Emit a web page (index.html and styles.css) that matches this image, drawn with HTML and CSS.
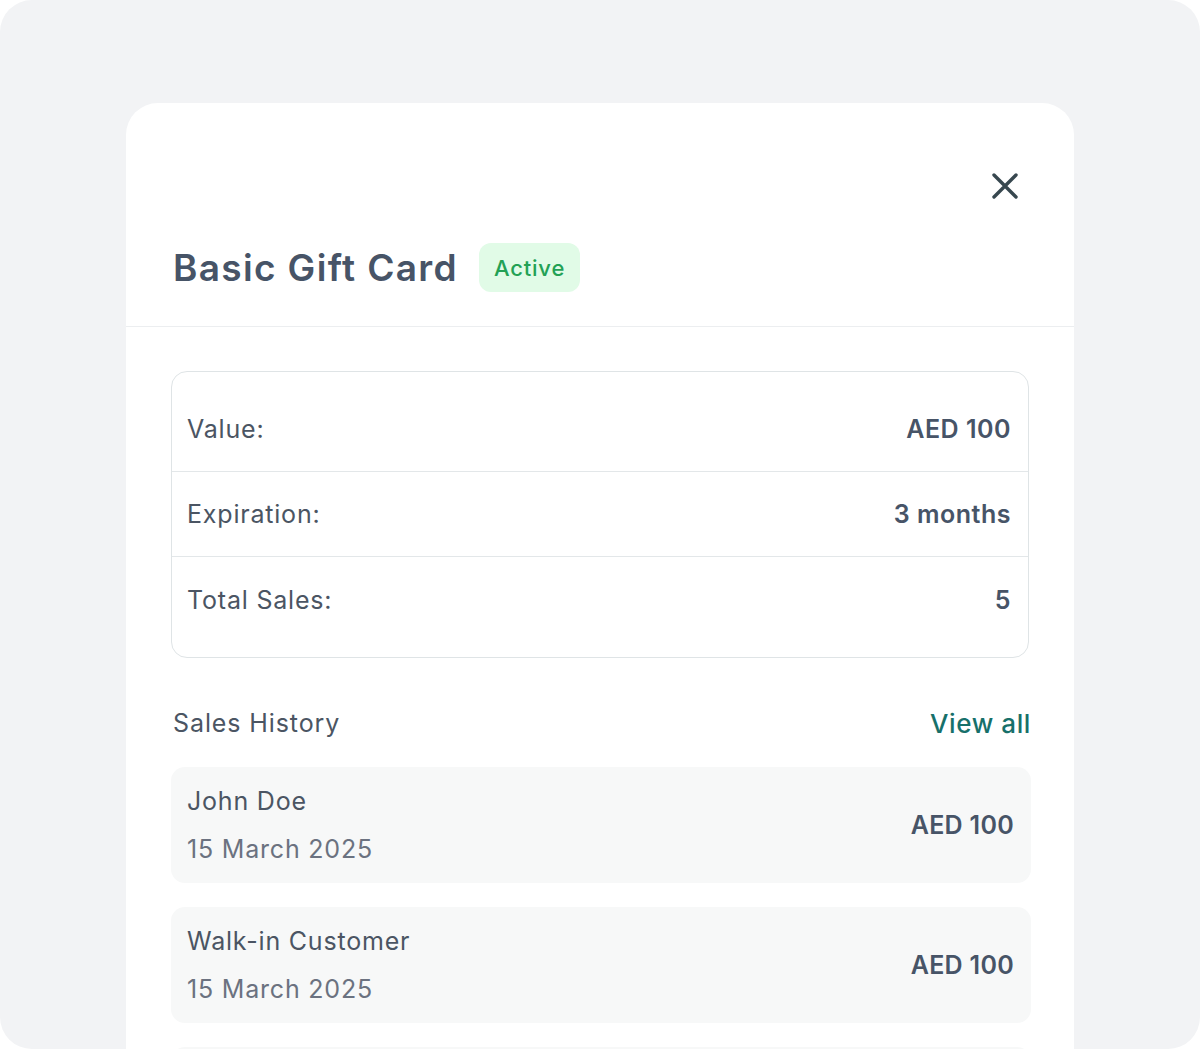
FILE: index.html
```html
<!DOCTYPE html>
<html lang="en">
<head>
<meta charset="utf-8">
<title>Basic Gift Card</title>
<link rel="stylesheet" href="styles.css">
</head>
<body>
<div class="screen">
  <div class="modal">
    <header class="modal-header">
      <div class="close-row">
        <button class="close-btn" aria-label="Close">
          <svg width="30" height="30" viewBox="0 0 30 30" fill="none">
            <path d="M4 4L26 26M26 4L4 26" stroke="#37474f" stroke-width="3.4" stroke-linecap="round"/>
          </svg>
        </button>
      </div>
      <div class="title-row">
        <h1 class="title">Basic Gift Card</h1>
        <span class="badge">Active</span>
      </div>
    </header>
    <section class="modal-body">
      <div class="info-box">
        <div class="info-row"><span class="label">Value:</span><span class="value">AED 100</span></div>
        <div class="info-row"><span class="label">Expiration:</span><span class="value">3 months</span></div>
        <div class="info-row"><span class="label">Total Sales:</span><span class="value">5</span></div>
      </div>
      <div class="history-head">
        <span class="history-title">Sales History</span>
        <a class="view-all" href="#">View all</a>
      </div>
      <div class="sales">
        <div class="sale">
          <div class="sale-info"><div class="sale-name">John Doe</div><div class="sale-date">15 March 2025</div></div>
          <div class="sale-amount">AED 100</div>
        </div>
        <div class="sale">
          <div class="sale-info"><div class="sale-name">Walk-in Customer</div><div class="sale-date">15 March 2025</div></div>
          <div class="sale-amount">AED 100</div>
        </div>
        <div class="sale"></div>
      </div>
    </section>
  </div>
</div>
</body>
</html>
```
FILE: styles.css
```css
* { box-sizing: border-box; }
html, body { margin: 0; padding: 0; background: #ffffff; }
body { font-family: Inter, "Open Sans", sans-serif; color: #4b5563; }
.screen {
  height: 1049px;
  overflow: hidden;
  background: #f2f3f5;
  border-radius: 32px;
  padding: 103px 126px 0 126px;
}
.modal {
  background: #ffffff;
  border-radius: 32px 32px 0 0;
  height: 946px;
  overflow: hidden;
}
.modal-header {
  padding: 63px 49px 34px 47px;
  border-bottom: 1px solid #eceef0;
}
.close-row { display: flex; justify-content: flex-end; }
.close-btn {
  width: 40px; height: 40px;
  display: flex; align-items: center; justify-content: center;
  border: 0; background: transparent; padding: 0;
}
.title-row {
  margin-top: 37px;
  height: 49px;
  display: flex; align-items: center; gap: 21px;
}
.title {
  margin: 0;
  font-size: 37px;
  font-weight: 600;
  color: #475467;
  letter-spacing: 1.35px;
}
.badge {
  height: 49px;
  padding: 0 15px;
  display: flex; align-items: center;
  background: #e1fbe7;
  color: #23a155;
  border-radius: 12px;
  font-size: 22px;
  font-weight: 500;
  letter-spacing: 0.8px;
}
.modal-body { padding: 44px 43px 0 45px; }
.info-box {
  margin-right: 2px;
  border: 1px solid #dfe4e6;
  border-radius: 16px;
  padding: 15px 0;
}
.info-row {
  height: 85px;
  display: flex; align-items: center; justify-content: space-between;
  padding: 0 17px 0 15px;
  border-bottom: 1px solid #e3e7e9;
}
.info-row:last-child { border-bottom: 0; }
.label { font-size: 25px; color: #4b5563; letter-spacing: 0.8px; }
.value { font-size: 25px; font-weight: 600; color: #475467; letter-spacing: 0.5px; }
.history-head {
  margin-top: 45px;
  height: 40px;
  display: flex; align-items: center; justify-content: space-between;
  padding-left: 2px;
}
.history-title { font-size: 25px; color: #4b5563; letter-spacing: 0.9px; }
.view-all { font-size: 26px; font-weight: 500; color: #17706a; text-decoration: none; letter-spacing: 0.6px; }
.sales { margin-top: 24px; display: flex; flex-direction: column; gap: 24px; }
.sale {
  height: 116px;
  flex-shrink: 0;
  background: #f7f8f8;
  border-radius: 14px;
  padding: 0 17px 0 16px;
  display: flex; align-items: center; justify-content: space-between;
}
.sale-name { font-size: 25px; line-height: 32px; color: #4b5563; letter-spacing: 0.8px; }
.sale-date { font-size: 25px; line-height: 32px; margin-top: 16px; color: #6b7280; letter-spacing: 0.8px; }
.sale-amount { font-size: 25px; font-weight: 600; color: #475467; letter-spacing: 0.3px; }
```
